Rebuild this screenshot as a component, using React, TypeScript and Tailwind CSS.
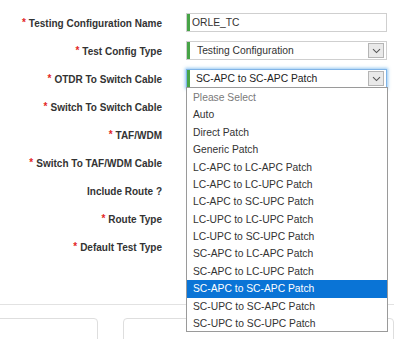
import { ReactNode } from "react"

const rows: { label: string; required: boolean }[] = [
  { label: "Testing Configuration Name", required: true },
  { label: "Test Config Type", required: true },
  { label: "OTDR To Switch Cable", required: true },
  { label: "Switch To Switch Cable", required: true },
  { label: "TAF/WDM", required: true },
  { label: "Switch To TAF/WDM Cable", required: true },
  { label: "Include Route ?", required: false },
  { label: "Route Type", required: true },
  { label: "Default Test Type", required: true },
]

const options = [
  "Please Select",
  "Auto",
  "Direct Patch",
  "Generic Patch",
  "LC-APC to LC-APC Patch",
  "LC-APC to LC-UPC Patch",
  "LC-APC to SC-UPC Patch",
  "LC-UPC to LC-UPC Patch",
  "LC-UPC to SC-UPC Patch",
  "SC-APC to LC-APC Patch",
  "SC-APC to LC-UPC Patch",
  "SC-APC to SC-APC Patch",
  "SC-UPC to SC-APC Patch",
  "SC-UPC to SC-UPC Patch",
]

function Caret() {
  return (
    <div className="absolute right-[2px] top-[1px] bottom-[1px] w-[16px] bg-[#e9e9e9] border border-[#b5b5b5] flex items-center justify-center">
      <svg width="9" height="6" viewBox="0 0 9 6">
        <path d="M1 1.2 L4.5 4.6 L8 1.2" fill="none" stroke="#555" strokeWidth="1.1" />
      </svg>
    </div>
  )
}

function Field({ children, focused, select }: { children: ReactNode; focused?: boolean; select?: boolean }) {
  return (
    <div
      className={
        focused
          ? "relative mt-[3px] h-[19px] w-[201px] bg-white border border-[#7fb4e8] shadow-[0_0_3px_1px_rgba(102,175,233,0.7)] flex items-center"
          : "relative mt-[3px] h-[19px] w-[201px] bg-white border border-[#cfcfcf] flex items-center"
      }
    >
      <div className="absolute left-0 top-0 bottom-0 w-[3px] bg-[#47a447]" />
      {children}
      {select && <Caret />}
    </div>
  )
}

export default function App() {
  return (
    <div className="relative w-[394px] h-[339px] overflow-hidden bg-white font-['Liberation_Sans',Arial,sans-serif]">
      <div className="pt-[10px]">
        {rows.map((row, i) => (
          <div key={row.label} className="flex items-start h-[28px]">
            <div className="w-[162px] text-right leading-[28px] text-[10px] font-bold text-[#333]">
              {row.required && <span className="text-[#e32626] mr-[3px] relative -top-[1px]">*</span>}
              {row.label}
            </div>
            <div className="ml-[24px]">
              {i === 0 && (
                <Field>
                  <span className="pl-[5px] text-[10.3px] text-[#333]">ORLE_TC</span>
                </Field>
              )}
              {i === 1 && (
                <Field select>
                  <span className="pl-[10px] text-[10.3px] text-[#333]">Testing Configuration</span>
                </Field>
              )}
              {i === 2 && (
                <Field select focused>
                  <span className="pl-[9px] text-[10.3px] text-[#222]">SC-APC to SC-APC Patch</span>
                </Field>
              )}
            </div>
          </div>
        ))}
      </div>

      <div className="mt-[42px] border-t border-[#e2e2e2]" />

      <div className="mt-[13px] flex gap-[25px]">
        <div className="-ml-[12px] w-[120px] h-[60px] rounded-[4px] border border-[#dedede] pl-[14px] pt-[18px] text-[15px] font-bold text-[#c4501c] leading-none">
          TTD AAA
        </div>
        <div className="w-[300px] h-[60px] rounded-[4px] border border-[#dedede] pl-[16px] pt-[18px] text-[15px] font-bold text-[#c4501c] leading-none">
          Election
        </div>
      </div>

      <div className="absolute left-[186px] top-[87px] w-[202px] h-[245px] bg-white border border-[#9a9a9a] pt-[1px]">
        {options.map((opt, i) => (
          <div
            key={opt}
            className={
              i === 11
                ? "h-[17.4px] flex items-center pl-[6px] text-[10.3px] bg-[#0a74d6] text-white"
                : i === 0
                  ? "h-[17.4px] flex items-center pl-[6px] text-[10.3px] text-[#7a7a7a]"
                  : "h-[17.4px] flex items-center pl-[6px] text-[10.3px] text-[#333]"
            }
          >
            {opt}
          </div>
        ))}
      </div>
    </div>
  )
}
